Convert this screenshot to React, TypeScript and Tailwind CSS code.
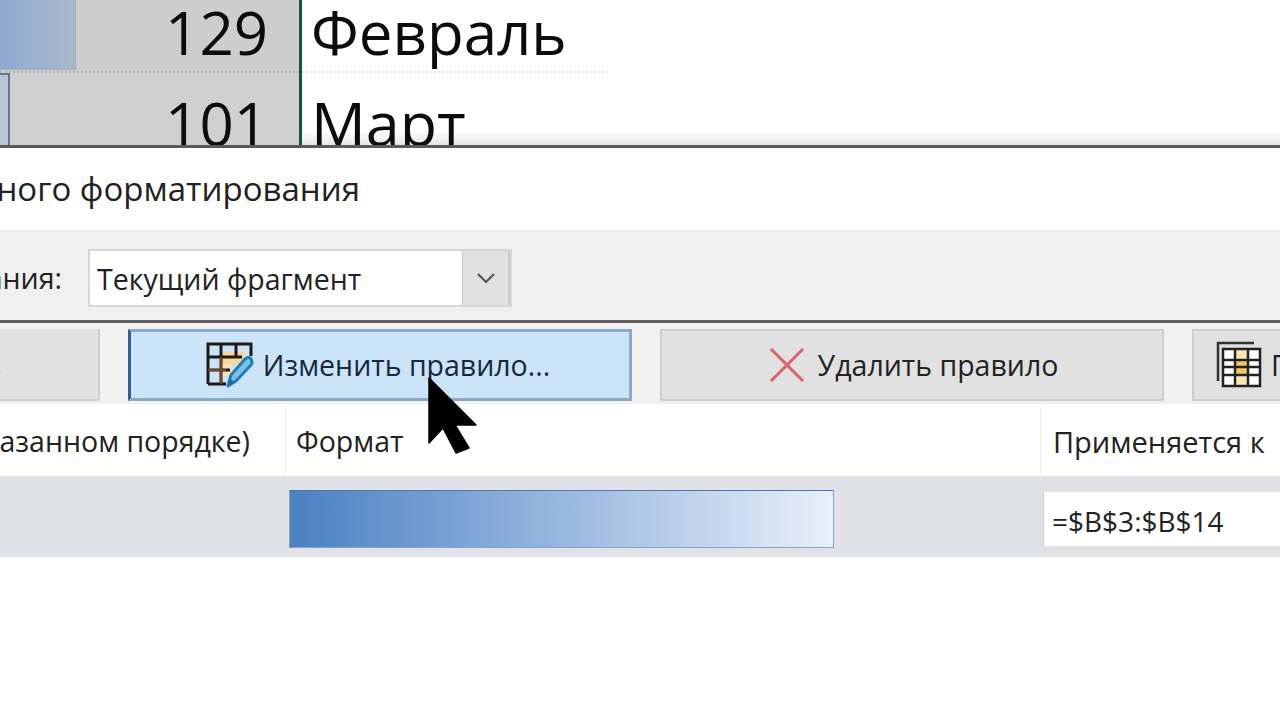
const font = "font-['Open_Sans','Noto_Sans',sans-serif]";

function EditRuleIcon() {
  return (
    <svg width="48" height="46" viewBox="0 0 48 46" fill="none" className="shrink-0">
      <rect x="16" y="10" width="22" height="12" fill="#f8d79a" />
      <rect x="16" y="22" width="10" height="12" fill="#fbe3b8" />
      <path d="M2 42V2H45V14M2 15H36M2 28H24M15 2V42M30 2V14M2 42H20" stroke="#1d1a18" strokeWidth="3" />
      <path d="M15 15V42M2 28H20" stroke="#8a5a28" strokeWidth="1.5" />
      <path d="M22 44l3-11 14-16c2-2 5-2 6 0s2 4 0 6L30 39z" fill="#7cc0e8" stroke="#1f7fb8" strokeWidth="3" strokeLinejoin="round" />
      <path d="M22 44l2-7 5 3z" fill="#1f6f9f" />
    </svg>
  );
}

function DuplicateIcon() {
  return (
    <svg width="46" height="48" viewBox="0 0 46 48" fill="none" className="shrink-0">
      <path d="M2 40V2H38" stroke="#333" strokeWidth="2.5" />
      <rect x="7" y="8" width="37" height="37" rx="1" fill="#fff" />
      <rect x="18" y="8" width="14" height="37" fill="#fbe6b4" />
      <rect x="18" y="19" width="14" height="14" fill="#f5c65f" />
      <path d="M7 8H44V45H7ZM19 8V45M32 8V45M7 19H44M7 26H44M7 34H44" stroke="#222" strokeWidth="2.5" />
    </svg>
  );
}

function DeleteIcon() {
  return (
    <svg width="36" height="36" viewBox="0 0 36 36" fill="none" className="shrink-0">
      <path d="M2 2L34 34M34 2L2 34" stroke="#d9636a" strokeWidth="3" />
    </svg>
  );
}

function Cursor() {
  return (
    <svg width="50" height="78" viewBox="0 0 50 78" className="absolute left-[428px] top-[377px]">
      <path d="M1 1V66L15 51L28 76L41 71L27 48H48Z" fill="#000" stroke="#000" strokeWidth="1.5" strokeLinejoin="round" />
    </svg>
  );
}

function SheetRow({ value, month, bar, first }: { value: string; month: string; bar: string; first?: boolean }) {
  return (
    <div className={first ? "flex h-[73px] overflow-hidden" : "relative z-10 flex h-[72px] overflow-hidden"}>
      <div className={first ? "flex w-[299px] border-b-2 border-dotted border-[#b4b4b4] bg-[#cdcdcd]" : "flex w-[299px] bg-[#d0d0d0]"}>
        <div className={bar} />
        <div className={first ? "flex-1 pr-[31px] text-right text-[60px] leading-[64px] font-medium text-[#0c0c0c]" : "flex-1 pr-[31px] pt-[18px] text-right text-[60px] leading-[64px] font-medium text-[#0c0c0c]"}>
          {value}
        </div>
      </div>
      <div className="w-[3px] bg-[#0f5c32]" />
      <div className={first ? "w-[306px] border-b-2 border-dotted border-[#e2e2e2] pl-[9px] text-[60px] leading-[64px] font-medium text-[#0c0c0c]" : "pl-[9px] pt-[18px] text-[61px] leading-[64px] font-medium text-[#0c0c0c]"}>
        {month}
      </div>
    </div>
  );
}

export default function App() {
  return (
    <div className={`relative flex h-[720px] w-[1280px] flex-col overflow-hidden bg-white ${font}`}>
      <div className="relative h-[145px] overflow-hidden">
        <SheetRow
          first
          value="129"
          month="Февраль"
          bar="h-[70px] w-[76px] border-r border-b border-[#9fadc2] bg-gradient-to-r from-[#8faacf] to-[#a9b8cc]"
        />
        <SheetRow
          value="101"
          month="Март"
          bar="h-[72px] w-[10px] border-t-2 border-r-2 border-[#66758a] bg-[#b9c5d4]"
        />
        <div className="absolute bottom-0 left-[302px] right-0 h-[14px] bg-gradient-to-b from-transparent to-[#e6e6e6]" />
      </div>
      <div className="h-[3px] bg-[#5a5a5a]" />

      <div className="flex h-[82px] items-center justify-end bg-white pr-[920px] text-[33px] whitespace-nowrap text-[#222]">
        Диспетчер правил условного форматирования
      </div>

      <div className="flex h-[93px] items-center border-b-[3px] border-[#5e5e5e] bg-[#f0f0f0] pt-[6px]">
        <div className="flex w-[88px] shrink-0 justify-end pr-[26px] text-[28.5px] whitespace-nowrap text-[#222]">Показать правила форматирования:</div>
        <div className="flex h-[58px] w-[424px] shrink-0 items-center justify-between border-2 border-[#d6d6d6] bg-white pl-[7px]">
          <span className="pt-[2px] text-[28.5px] text-[#222]">Текущий фрагмент</span>
          <div className="flex h-full w-[48px] items-center justify-center border-r-2 border-l border-[#c9c9c9] bg-[#e1e1e1]">
            <svg width="20" height="12" viewBox="0 0 20 12" fill="none">
              <path d="M2 2L10 10L18 2" stroke="#555" strokeWidth="2.2" />
            </svg>
          </div>
        </div>
      </div>

      <div className="flex h-[81px] items-center gap-[28px] bg-[#f1f1f1] pt-[3px]">
        <div className="flex h-[72px] w-[100px] shrink-0 items-center justify-end overflow-hidden border-r-2 border-b-2 border-[#cfcfcf] bg-[#e1e1e1] pr-[96px] text-[28.5px] whitespace-nowrap text-[#222]">
          Создать правило...
        </div>
        <div className="flex h-[72px] w-[504px] shrink-0 items-center justify-center gap-[9px] border-[3px] border-[#8aa9c9] border-l-[#2c6296] bg-[#cce4f7] pr-[4px] text-[28.5px] text-[#16293b]">
          <EditRuleIcon />
          <span>Изменить правило...</span>
        </div>
        <div className="flex h-[72px] w-[504px] shrink-0 items-center justify-center gap-[13px] border-2 border-[#cdcdcd] bg-[#e1e1e1] pl-[3px] text-[28.5px] text-[#222]">
          <DeleteIcon />
          <span>Удалить правило</span>
        </div>
        <div className="flex h-[72px] flex-1 items-center gap-[9px] overflow-hidden border-2 border-r-0 border-[#cdcdcd] bg-[#e1e1e1] pl-[22px] text-[28.5px] whitespace-nowrap text-[#222]">
          <DuplicateIcon />
          <span>Повторяющееся правило</span>
        </div>
      </div>

      <div className="flex h-[72px] bg-white pt-[3px] text-[28.5px] whitespace-nowrap text-[#222]">
        <div className="flex w-[286px] shrink-0 items-center justify-end border-r border-[#eeeeee] pr-[35px]">Правило (применяется в указанном порядке)</div>
        <div className="flex w-[755px] shrink-0 items-center border-r border-[#eeeeee] pl-[10px]">Формат</div>
        <div className="flex items-center pl-[12px] text-[29px]">Применяется к</div>
      </div>

      <div className="flex h-[81px] items-center bg-[#e1e1e8] pt-[5px]">
        <div className="ml-[289px] h-[58px] w-[545px] shrink-0 border border-[#86a3cc] border-t-[#4f78ad] bg-gradient-to-r from-[#4a80c2] to-[#e8f0f9]" />
        <div className="ml-[209px] flex h-[54px] flex-1 items-center border-l border-[#d0d0d0] bg-white pl-[8px] pt-[4px] text-[28px] text-[#222]">
          =$B$3:$B$14
        </div>
      </div>

      <div className="flex-1 bg-white" />
      <Cursor />
    </div>
  );
}
